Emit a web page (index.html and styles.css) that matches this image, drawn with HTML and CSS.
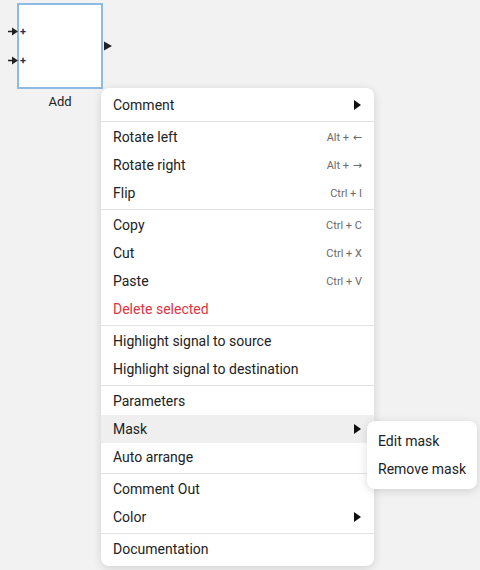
FILE: index.html
```html
<!DOCTYPE html>
<html lang="en">
<head>
    <meta charset="UTF-8">
    <title>Block menu</title>
    <link rel="stylesheet" href="styles.css">
</head>
<body>
    <div class="canvas">
        <div class="block">
            <div class="block-box">
                <span class="port-in port-in-1">
                    <svg width="11" height="9" viewBox="0 0 11 9"><path d="M0 4.5H5" stroke="#222" stroke-width="1.5"/><path d="M4 0.5L10 4.5L4 8.5Z" fill="#222"/></svg>
                </span>
                <span class="port-in port-in-2">
                    <svg width="11" height="9" viewBox="0 0 11 9"><path d="M0 4.5H5" stroke="#222" stroke-width="1.5"/><path d="M4 0.5L10 4.5L4 8.5Z" fill="#222"/></svg>
                </span>
                <span class="sign sign-1">+</span>
                <span class="sign sign-2">+</span>
                <span class="port-out">
                    <svg width="10" height="10" viewBox="0 0 10 10"><path d="M1 0.5L9 5L1 9.5Z" fill="#222"/></svg>
                </span>
            </div>
            <div class="block-label">Add</div>
        </div>

        <div class="menu">
            <div class="item">Comment <span class="caret"></span></div>
            <div class="sep"></div>
            <div class="item">Rotate left <span class="key">Alt + <span class="arrow">&larr;</span></span></div>
            <div class="item">Rotate right <span class="key">Alt + <span class="arrow">&rarr;</span></span></div>
            <div class="item">Flip <span class="key">Ctrl + I</span></div>
            <div class="sep"></div>
            <div class="item">Copy <span class="key">Ctrl + C</span></div>
            <div class="item">Cut <span class="key">Ctrl + X</span></div>
            <div class="item">Paste <span class="key">Ctrl + V</span></div>
            <div class="item danger">Delete selected</div>
            <div class="sep"></div>
            <div class="item">Highlight signal to source</div>
            <div class="item">Highlight signal to destination</div>
            <div class="sep"></div>
            <div class="item">Parameters</div>
            <div class="item active">Mask <span class="caret"></span>
                <div class="submenu">
                    <div class="item">Edit mask</div>
                    <div class="item">Remove mask</div>
                </div>
            </div>
            <div class="item">Auto arrange</div>
            <div class="sep"></div>
            <div class="item">Comment Out</div>
            <div class="item">Color <span class="caret"></span></div>
            <div class="sep"></div>
            <div class="item">Documentation</div>
        </div>
    </div>
</body>
</html>
```

FILE: styles.css
```css
body {
    margin: 0;
    background: #f2f2f2;
    font-family: Roboto, "Liberation Sans", sans-serif;
    color: #222;
}

.canvas {
    position: relative;
    width: 480px;
    height: 570px;
    overflow: hidden;
}

.block {
    position: absolute;
    left: 17px;
    top: 3px;
    width: 86px;
}

.block-box {
    position: relative;
    height: 86px;
    box-sizing: border-box;
    background: #fff;
    border: 2px solid #8dbbe3;
}

.port-in {
    position: absolute;
    left: -11px;
    line-height: 0;
}

.port-in-1 { top: 22px; }
.port-in-2 { top: 51px; }

.sign {
    position: absolute;
    left: 1px;
    font-size: 11px;
    line-height: 11px;
    font-weight: bold;
    color: #1d3557;
}

.sign-1 { top: 21px; }
.sign-2 { top: 50px; }

.port-out {
    position: absolute;
    right: -12px;
    top: 36px;
    line-height: 0;
}

.block-label {
    text-align: center;
    font-size: 13px;
    margin-top: 5px;
    color: #222;
}

.menu {
    position: absolute;
    left: 101px;
    top: 88px;
    width: 273px;
    padding: 3px 0;
    background: #fff;
    border-radius: 8px;
    box-shadow: 0 2px 10px rgba(0, 0, 0, 0.14);
}

.item {
    position: relative;
    display: flex;
    align-items: center;
    justify-content: space-between;
    height: 28px;
    padding: 0 12px;
    font-size: 14px;
    color: #222;
    white-space: nowrap;
}

.item.active {
    background: #efefef;
}

.item.danger {
    color: #dc3545;
}

.sep {
    height: 1px;
    margin: 2px 0 1px;
    background: #e3e3e3;
}

.key {
    font-size: 11px;
    color: #6b6b6b;
}

.arrow {
    font-family: "DejaVu Sans", sans-serif;
    font-size: 11px;
    margin-left: 1px;
}

.caret {
    width: 0;
    height: 0;
    margin-right: 1px;
    border-top: 5px solid transparent;
    border-bottom: 5px solid transparent;
    border-left: 7px solid #111;
}

.submenu {
    position: absolute;
    left: 266px;
    top: 6px;
    width: 110px;
    padding: 6px 0;
    background: #fff;
    border-radius: 8px;
    box-shadow: 0 2px 10px rgba(0, 0, 0, 0.14);
}

.submenu .item {
    padding: 0 11px;
}
```
